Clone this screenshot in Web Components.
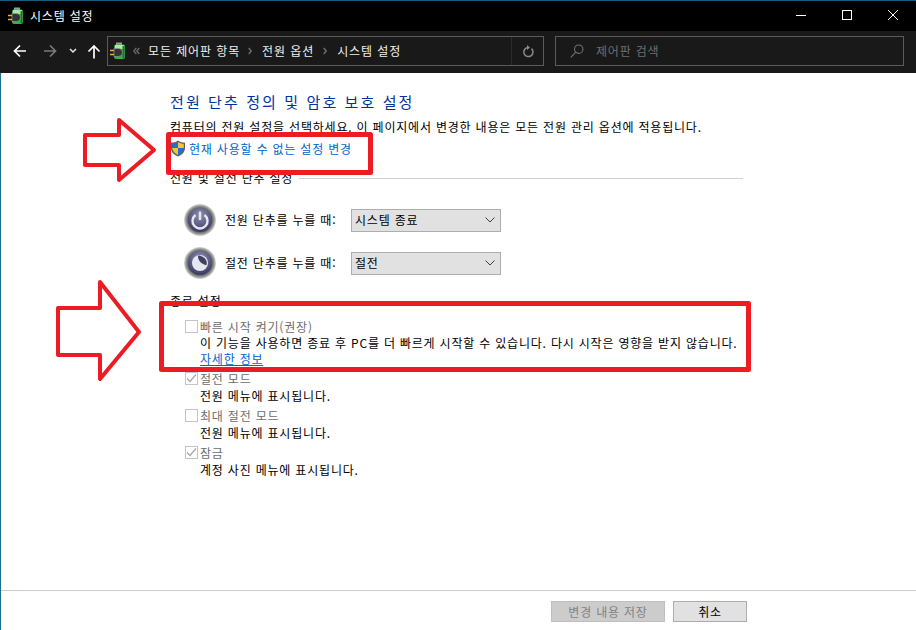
<!DOCTYPE html>
<html lang="ko">
<head>
<meta charset="utf-8">
<title>시스템 설정</title>
<style>
	html, body { margin: 0; padding: 0; background: #fff; }
	body { font: 12px/17px "Noto Sans CJK KR", "Noto Sans", sans-serif; letter-spacing: .8px; color: #000; }
</style>
</head>
<body>
<app-window>
	<title-bar slot="top">시스템 설정</title-bar>
	<nav-bar slot="top"></nav-bar>

	<page-heading>전원 단추 정의 및 암호 보호 설정</page-heading>
	<p-text style="margin-top:6px">컴퓨터의 전원 설정을 선택하세요. 이 페이지에서 변경한 내용은 모든 전원 관리 옵션에 적용됩니다.</p-text>
	<shield-link>현재 사용할 수 없는 설정 변경</shield-link>

	<section-title style="margin-top:12px" line>전원 및 절전 단추 설정</section-title>
	<power-row style="margin-top:18px" kind="power" label="전원 단추를 누를 때:" value="시스템 종료"></power-row>
	<power-row style="margin-top:11px" kind="sleep" label="절전 단추를 누를 때:" value="절전"></power-row>

	<section-title style="margin-top:13px">종료 설정</section-title>
	<setting-option style="margin-top:9px" label="빠른 시작 켜기(권장)" more="자세한 정보">이 기능을 사용하면 종료 후 PC를 더 빠르게 시작할 수 있습니다. 다시 시작은 영향을 받지 않습니다.</setting-option>
	<setting-option style="margin-top:3px" label="절전 모드" checked>전원 메뉴에 표시됩니다.</setting-option>
	<setting-option style="margin-top:3px" label="최대 절전 모드">전원 메뉴에 표시됩니다.</setting-option>
	<setting-option style="margin-top:3px" label="잠금" checked>계정 사진 메뉴에 표시됩니다.</setting-option>

	<foot-bar slot="bottom"></foot-bar>
	<red-marks slot="over"></red-marks>
</app-window>

<script>
// The battery-and-plug icon is used twice (title bar and address bar)
const batteryIcon = `
	<svg width="17" height="18" viewBox="0 0 17 18">
		<rect x="6" y="0.500" width="6" height="2.500" fill="#9a9a9a"/>
		<rect x="4" y="2.500" width="11" height="14.500" rx="2" fill="#2fb344"/>
		<rect x="5" y="3" width="9" height="4" fill="#a6eaa6"/>
		<rect x="12.500" y="4" width="2" height="12" fill="#157a2a"/>
		<path d="M4 6.500h4.500a4 4 0 0 1 0 8H4z" fill="#333" stroke="#9a9a9a" stroke-width=".7"/>
		<path d="M0 8.500h4M0 12.500h4" stroke="#e8b23a" stroke-width="1.300"/>
	</svg>`;

class AppWindow extends HTMLElement {
	constructor() {
		super();
		this.attachShadow({mode: "open"});
		this.shadowRoot.innerHTML = `
			<style>
				:host { display: flex; flex-direction: column; position: relative; width: 916px; height: 630px; overflow: hidden; background: #fff; }
				.edge { position: absolute; left: 0; top: 73px; bottom: 0; width: 1px; background: #1b6f8f; }
				main { flex: 1; padding: 19px 0 0 170px; min-height: 0; }
			</style>
			<slot name="top"></slot>
			<main><slot></slot></main>
			<slot name="bottom"></slot>
			<slot name="over"></slot>
			<div class="edge"></div>
		`;
	}
}

class TitleBar extends HTMLElement {
	constructor() {
		super();
		this.attachShadow({mode: "open"});
		this.shadowRoot.innerHTML = `
			<style>
				:host { display: flex; align-items: center; height: 31px; background: #000; color: #fff; box-sizing: border-box; border-top: 1px solid #1a5a7a; }
				.icon { display: flex; margin-left: 8px; }
				.name { margin-left: 5px; margin-top: -1px; flex: 1; }
				.ctl { display: flex; }
				.ctl svg { display: block; width: 46px; height: 30px; }
			</style>
			<span class="icon">${batteryIcon}</span>
			<span class="name"><slot></slot></span>
			<span class="ctl">
				<svg viewBox="0 0 46 30"><path d="M18 14.500h10" stroke="#fff"/></svg>
				<svg viewBox="0 0 46 30"><rect x="18.500" y="9.500" width="9" height="9" fill="none" stroke="#fff"/></svg>
				<svg viewBox="0 0 46 30"><path d="M18 9l10 10M28 9L18 19" stroke="#fff" fill="none"/></svg>
			</span>
		`;
	}
}

class NavBar extends HTMLElement {
	constructor() {
		super();
		this.attachShadow({mode: "open"});
		const chevron = (left) => `<svg style="margin-left:${left}px" width="4" height="8" viewBox="0 0 4 8"><path d="M.7 1l2.500 3-2.500 3" fill="none" stroke="#6b6b6b" stroke-width="1.500"/></svg>`;
		this.shadowRoot.innerHTML = `
			<style>
				:host { display: flex; align-items: center; height: 42px; background: #191919; color: #f0f0f0; box-sizing: border-box; padding: 5px 12px 7px 13px; }
				svg { display: block; flex: none; }
				.btns { display: flex; align-items: center; width: 94px; height: 100%; }
				.box { display: flex; align-items: center; box-sizing: border-box; height: 30px; border: 1px solid #5b5b5b; }
				.addr { width: 437px; padding-left: 2px; letter-spacing: .9px; }
				.addr span { white-space: nowrap; margin-top: -2px; }
				.refresh { margin-left: auto; width: 31px; height: 28px; border-left: 1px solid #2c2c2c; display: flex; align-items: center; justify-content: center; }
				.find { margin-left: 11px; flex: 1; color: #6f6f6f; padding-left: 14px; }
				.find span { margin-top: -2px; }
			</style>
			<div class="btns">
				<svg width="14" height="14" viewBox="0 0 14 14"><path d="M13 7H2M7 1.500L1.500 7 7 12.500" fill="none" stroke="#fff" stroke-width="1.700"/></svg>
				<svg style="margin-left:16px" width="14" height="14" viewBox="0 0 14 14"><path d="M1 7h11M7 1.500L12.500 7 7 12.500" fill="none" stroke="#7a7a7a" stroke-width="1.700"/></svg>
				<svg style="margin-left:12px" width="8" height="6" viewBox="0 0 8 6"><path d="M1 1l3 3 3-3" fill="none" stroke="#e6e6e6" stroke-width="1.500"/></svg>
				<svg style="margin-left:10px" width="14" height="15" viewBox="0 0 14 15"><path d="M7 14.500V2M1.500 7.500L7 2l5.500 5.500" fill="none" stroke="#fff" stroke-width="1.700"/></svg>
			</div>
			<div class="box addr">
				${batteryIcon}
				<svg style="margin-left:6px" width="7" height="8" viewBox="0 0 7 8"><path d="M3.300 1L.8 4l2.500 3M6.300 1L3.800 4l2.500 3" fill="none" stroke="#6b6b6b" stroke-width="1.300"/></svg>
				<span style="margin-left:8px">모든 제어판 항목</span>
				${chevron(8)}
				<span style="margin-left:10px">전원 옵션</span>
				${chevron(9)}
				<span style="margin-left:10px">시스템 설정</span>
				<div class="refresh">
					<svg width="12" height="13" viewBox="0 0 12 13"><path d="M9.500 3.600A4.600 4.600 0 1 1 6 2.400" fill="none" stroke="#8a8a8a" stroke-width="1.500"/><path d="M5 0v5l3-2.500z" fill="#8a8a8a"/></svg>
				</div>
			</div>
			<div class="box find">
				<svg width="14" height="14" viewBox="0 0 14 14"><circle cx="8.700" cy="5.200" r="4.200" fill="none" stroke="#6f6f6f" stroke-width="1.100"/><path d="M5.800 8.200L.8 13.400" stroke="#6f6f6f" stroke-width="1.200"/></svg>
				<span style="margin-left:12px">제어판 검색</span>
			</div>
		`;
	}
}

class PageHeading extends HTMLElement {
	constructor() {
		super();
		this.attachShadow({mode: "open"});
		this.shadowRoot.innerHTML = `
			<style>:host { display: block; font-size: 15px; line-height: 20px; letter-spacing: 2.100px; color: #003399; white-space: nowrap; }</style>
			<slot></slot>
		`;
	}
}

class PText extends HTMLElement {
	constructor() {
		super();
		this.attachShadow({mode: "open"});
		this.shadowRoot.innerHTML = `
			<style>:host { display: block; white-space: nowrap; }</style>
			<slot></slot>
		`;
	}
}

class ShieldLink extends HTMLElement {
	constructor() {
		super();
		this.attachShadow({mode: "open"});
		this.shadowRoot.innerHTML = `
			<style>
				:host { display: flex; align-items: center; margin-top: 4px; height: 18px; color: #0066cc; white-space: nowrap; }
				svg { display: block; margin-right: 3px; }
			</style>
			<svg width="16" height="17" viewBox="0 0 16 17">
				<path d="M8 .5C6 2 3.500 2.700 1 2.700V8c0 4 3 7 7 8.500 4-1.500 7-4.500 7-8.500V2.700C12.500 2.700 10 2 8 .5z" fill="#5a5f6a"/>
				<path d="M8 2v6H2.200V3.800C4.400 3.700 6.300 3.100 8 2z" fill="#1f6fd6"/>
				<path d="M8 2v6h5.800V3.800C11.600 3.700 9.700 3.100 8 2z" fill="#f7c531"/>
				<path d="M8 8v7C5 13.800 2.600 11.300 2.200 8z" fill="#f7c531"/>
				<path d="M8 8v7c3-1.200 5.400-3.700 5.800-7z" fill="#1f6fd6"/>
			</svg>
			<slot></slot>
		`;
	}
}

class SectionTitle extends HTMLElement {
	constructor() {
		super();
		this.attachShadow({mode: "open"});
		this.shadowRoot.innerHTML = `
			<style>
				:host { display: flex; align-items: center; width: 573px; white-space: nowrap; }
				.rule { flex: 1; height: 1px; margin-left: 6px; margin-top: 1px; background: #d0d0d0; display: none; }
				:host([line]) .rule { display: block; }
			</style>
			<slot></slot><span class="rule"></span>
		`;
	}
}

class PowerRow extends HTMLElement {
	constructor() {
		super();
		this.attachShadow({mode: "open"});
		const sleep = this.getAttribute("kind") === "sleep";
		const glyph = sleep
			? `<circle cx="16" cy="16" r="8" fill="#e6e6f0"/><path d="M14 8.400c3 .2 6.500 1.500 8 4.600 1 2 1 3.500.4 5.200-3.200-.6-6.500-2.600-7.600-5.400-.6-1.600-1-3-.8-4.400z" fill="#41415f"/>`
			: `<path d="M11.500 11a7.500 7.500 0 1 0 9 0" fill="none" stroke="#e6e6f0" stroke-width="2.400"/><path d="M16 7.500v8.500" stroke="#e6e6f0" stroke-width="2.400"/>`;
		this.shadowRoot.innerHTML = `
			<style>
				:host { display: flex; align-items: center; height: 32px; margin-left: 14px; white-space: nowrap; }
				svg { display: block; flex: none; }
				.label { width: 126px; margin-left: 9px; padding-bottom: 2px; }
				.combo { display: flex; align-items: center; justify-content: space-between; box-sizing: border-box; width: 150px; height: 23px; padding: 0 5px 0 3px; background: #e1e1e1; border: 1px solid #adadad; }
				.combo span { margin-top: -1px; }
			</style>
			<svg width="32" height="32" viewBox="0 0 32 32">
				<defs>
					<radialGradient id="ring" cx=".5" cy=".5" r=".5">
						<stop offset=".72" stop-color="#5a5a5a"/>
						<stop offset=".86" stop-color="#8f8f8f"/>
						<stop offset="1" stop-color="#dcdcdc"/>
					</radialGradient>
					<radialGradient id="face" cx=".5" cy=".3" r=".8">
						<stop offset="0" stop-color="#8f8fb0"/>
						<stop offset=".6" stop-color="#55557c"/>
						<stop offset="1" stop-color="#2c2c4c"/>
					</radialGradient>
				</defs>
				<circle cx="16" cy="16" r="16" fill="url(#ring)"/>
				<circle cx="16" cy="16" r="12" fill="url(#face)"/>
				${glyph}
			</svg>
			<span class="label">${this.getAttribute("label")}</span>
			<span class="combo">
				<span>${this.getAttribute("value")}</span>
				<svg width="10" height="6" viewBox="0 0 10 6"><path d="M.5.500L5 5 9.500.500" fill="none" stroke="#404040"/></svg>
			</span>
		`;
	}
}

class SettingOption extends HTMLElement {
	constructor() {
		super();
		this.attachShadow({mode: "open"});
		const more = this.getAttribute("more");
		const tick = this.hasAttribute("checked")
			? `<path d="M2 6.500l3 3 6-7" fill="none" stroke="#a8a8a8" stroke-width="1.300"/>` : "";
		this.shadowRoot.innerHTML = `
			<style>
				:host { display: grid; grid-template-columns: 15px auto; margin-left: 15px; white-space: nowrap; }
				svg { display: block; align-self: center; }
				.name { color: #6d6d6d; }
				.text { grid-column: 2; }
				:host([more]) .text { line-height: 16px; }
				a { grid-column: 2; justify-self: start; line-height: 15px; margin-bottom: 1px; color: #0066cc; text-decoration: underline; }
			</style>
			<svg width="13" height="13" viewBox="0 0 13 13"><rect x=".5" y=".5" width="12" height="12" fill="#fff" stroke="#c4c4c4"/>${tick}</svg>
			<span class="name">${this.getAttribute("label")}</span>
			<span class="text"><slot></slot></span>
			${more ? `<a href="#">${more}</a>` : ""}
		`;
	}
}

class FootBar extends HTMLElement {
	constructor() {
		super();
		this.attachShadow({mode: "open"});
		this.shadowRoot.innerHTML = `
			<style>
				:host { display: flex; align-items: flex-start; justify-content: flex-end; gap: 8px; box-sizing: border-box; height: 40px; padding: 10px 169px 0 0; border-top: 1px solid #cdcdcd; }
				span { display: flex; align-items: center; justify-content: center; box-sizing: border-box; height: 21px; border: 1px solid #adadad; background: #e1e1e1; }
				.save { width: 114px; background: #cccccc; border-color: #bfbfbf; color: #838383; }
				.cancel { width: 74px; }
			</style>
			<span class="save">변경 내용 저장</span>
			<span class="cancel">취소</span>
		`;
	}
}

// Red arrows and boxes someone painted over the screenshot, so they sit on a free canvas
class RedMarks extends HTMLElement {
	constructor() {
		super();
		this.attachShadow({mode: "open"});
		this.shadowRoot.innerHTML = `
			<style>
				:host { display: block; position: absolute; inset: 0; pointer-events: none; }
				svg { display: block; }
			</style>
			<svg width="916" height="630" viewBox="0 0 916 630">
				<g fill="none" stroke="#ed1c24" stroke-linejoin="round">
					<rect x="168.500" y="134.500" width="202" height="38" stroke-width="5"/>
					<rect x="161.500" y="303.500" width="587" height="66" stroke-width="5"/>
					<path d="M85 135H119V120L154 150 119 180V165H85z" stroke-width="4"/>
					<path d="M58 308H100V282L139 332 100 379V355H58z" stroke-width="4"/>
				</g>
			</svg>
		`;
	}
}

customElements.define("app-window", AppWindow);
customElements.define("title-bar", TitleBar);
customElements.define("nav-bar", NavBar);
customElements.define("page-heading", PageHeading);
customElements.define("p-text", PText);
customElements.define("shield-link", ShieldLink);
customElements.define("section-title", SectionTitle);
customElements.define("power-row", PowerRow);
customElements.define("setting-option", SettingOption);
customElements.define("foot-bar", FootBar);
customElements.define("red-marks", RedMarks);
</script>
</body>
</html>
